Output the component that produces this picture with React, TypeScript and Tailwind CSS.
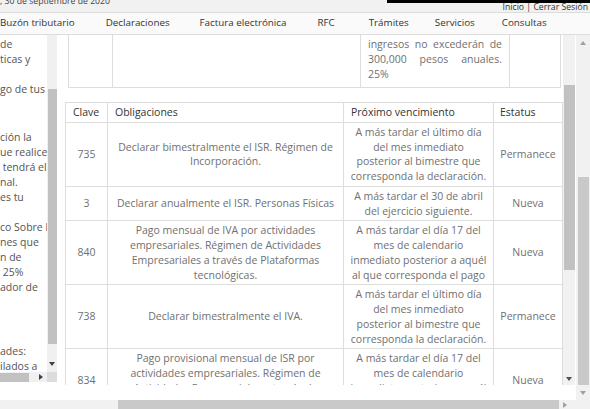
import React from "react";

interface Obligacion {
  clave: string;
  obligacion: string[];
  vencimiento: string[];
  estatus: string;
}

const ultimoDia = [
  "A más tardar el último día",
  "del mes inmediato",
  "posterior al bimestre que",
  "corresponda la declaración.",
];

const dia17 = [
  "A más tardar el día 17 del",
  "mes de calendario",
  "inmediato posterior a aquél",
  "al que corresponda el pago",
];

const obligaciones: Obligacion[] = [
  {
    clave: "735",
    obligacion: ["Declarar bimestralmente el ISR. Régimen de", "Incorporación."],
    vencimiento: ultimoDia,
    estatus: "Permanece",
  },
  {
    clave: "3",
    obligacion: ["Declarar anualmente el ISR. Personas Físicas"],
    vencimiento: ["A más tardar el 30 de abril", "del ejercicio siguiente."],
    estatus: "Nueva",
  },
  {
    clave: "840",
    obligacion: [
      "Pago mensual de IVA por actividades",
      "empresariales. Régimen de Actividades",
      "Empresariales a través de Plataformas",
      "tecnológicas.",
    ],
    vencimiento: dia17,
    estatus: "Nueva",
  },
  {
    clave: "738",
    obligacion: ["Declarar bimestralmente el IVA."],
    vencimiento: ultimoDia,
    estatus: "Permanece",
  },
  {
    clave: "834",
    obligacion: [
      "Pago provisional mensual de ISR por",
      "actividades empresariales. Régimen de",
      "Actividades Empresariales a través de",
      "Plataformas tecnológicas.",
    ],
    vencimiento: dia17,
    estatus: "Nueva",
  },
];

const menu = [
  { label: "Buzón tributario", ml: "ml-0" },
  { label: "Declaraciones", ml: "ml-[31px]" },
  { label: "Factura electrónica", ml: "ml-[30px]" },
  { label: "RFC", ml: "ml-[31px]" },
  { label: "Trámites", ml: "ml-[34px]" },
  { label: "Servicios", ml: "ml-[26px]" },
  { label: "Consultas", ml: "ml-[27px]" },
];

// lineas visibles del panel izquierdo (recortado por el scroll horizontal)
const panelLines: { t: string; mt?: string }[] = [
  { t: "de" },
  { t: "ticas y" },
  { t: "" },
  { t: "go de tus" },
  { t: "" },
  { t: "" },
  { t: "ción la", mt: "mt-[3px]" },
  { t: "ue realice" },
  { t: " tendrá el" },
  { t: "nal." },
  { t: "es tu" },
  { t: "" },
  { t: "co Sobre l." },
  { t: "nes que" },
  { t: "n de" },
  { t: " 25%" },
  { t: "ador de" },
  { t: "" },
  { t: "" },
  { t: "" },
  { t: "ades:", mt: "mt-[4px]" },
  { t: "ilados a" },
];

const Arrow: React.FC<{ dir: "up" | "down" | "right"; color?: string }> = ({ dir, color = "#505050" }) => {
  if (dir === "right") {
    return (
      <svg width="4" height="6" viewBox="0 0 4 6">
        <path d="M0 0 L4 3 L0 6 Z" fill={color} />
      </svg>
    );
  }
  return (
    <svg width="6" height="4" viewBox="0 0 6 4">
      <path d={dir === "down" ? "M0 0 L6 0 L3 4 Z" : "M0 4 L6 4 L3 0 Z"} fill={color} />
    </svg>
  );
};

const App: React.FC = () => {
  return (
    <div className="w-[590px] h-[409px] overflow-hidden bg-white font-['Open_Sans',sans-serif] text-[#707070] flex flex-col">
      {/* encabezado */}
      <div className="h-[12px] bg-[#f1f1f1] flex justify-between overflow-hidden">
        <div className="-mt-[5px] text-[8.7px] leading-[12px] text-[#444] whitespace-nowrap">
          , 30 de septiembre de 2020
        </div>
        <div className="w-[203px] flex flex-col">
          <div className="h-[3px] bg-black" />
          <div className="text-right pr-[2px] text-[8.7px] leading-[7px] mt-[1px] text-[#333] whitespace-nowrap">
            Inicio | Cerrar Sesión
          </div>
        </div>
      </div>

      {/* menu */}
      <div className="h-[23px] bg-[#fafafa] border-y border-[#dcdcdc] flex items-center text-[9.8px] text-[#333] whitespace-nowrap">
        {menu.map((m) => (
          <span key={m.label} className={m.ml}>
            {m.label}
          </span>
        ))}
      </div>

      {/* cuerpo */}
      <div className="flex h-[374px]">
        <div className="w-[576px] flex flex-col">
          <div className="flex h-[365px]">
            {/* panel izquierdo */}
            <div className="w-[58px] flex flex-col">
              <div className="h-[347px] flex flex-col">
                <div className="flex h-[337px]">
                  <div className="w-[47px] overflow-hidden pt-[1.5px] text-[10.5px] leading-[15px] text-[#555] whitespace-pre">
                    {panelLines.map((l, i) => (
                      <div key={i} className={`h-[15px] ${l.mt ?? ""}`}>
                        {l.t}
                      </div>
                    ))}
                  </div>
                  <div className="w-[10px] bg-[#f0f0f0] flex flex-col items-center">
                    <div className="h-[54px]" />
                    <div className="h-[255px] w-[9px] bg-[#c1c1c1]" />
                    <div className="flex-1" />
                    <div className="h-[17px] flex items-center justify-center">
                      <Arrow dir="down" color="#404040" />
                    </div>
                  </div>
                </div>
                <div className="flex h-[10px]">
                  <div className="w-[47px] bg-[#f0f0f0] flex items-center">
                    <div className="w-[29px] h-[9px] bg-[#c1c1c1]" />
                    <div className="w-[5px]" />
                    <div className="w-[13px] flex justify-center">
                      <Arrow dir="right" color="#404040" />
                    </div>
                  </div>
                  <div className="w-[10px] bg-[#dcdcdc]" />
                </div>
              </div>
            </div>

            {/* contenido */}
            <div className="w-[518px] flex">
              <div className="w-[505px] h-[350px] overflow-hidden flex flex-col">
                {/* tabla anterior (recortada) */}
                <table className="ml-[10px] w-[492px] table-fixed border-collapse text-[10.5px] leading-[15px]">
                  <colgroup>
                    <col className="w-[44px]" />
                    <col className="w-[248px]" />
                    <col className="w-[149px]" />
                    <col className="w-[51px]" />
                  </colgroup>
                  <tbody>
                    <tr>
                      <td className="border-x border-b border-[#ddd]" />
                      <td className="border-x border-b border-[#ddd]" />
                      <td className="border-x border-b border-[#ddd] px-[7px] pt-[2px] pb-[5px]">
                        <div className="[text-align-last:justify]">ingresos no excederán de</div>
                        <div className="[text-align-last:justify]">300,000 pesos anuales.</div>
                        <div>25%</div>
                      </td>
                      <td className="border-x border-b border-[#ddd]" />
                    </tr>
                  </tbody>
                </table>

                {/* obligaciones */}
                <table className="mt-[14px] ml-[7px] w-[497px] table-fixed border-collapse text-[10.5px] leading-[14.75px]">
                  <colgroup>
                    <col className="w-[42px]" />
                    <col className="w-[236px]" />
                    <col className="w-[150px]" />
                    <col className="w-[69px]" />
                  </colgroup>
                  <thead>
                    <tr className="text-left text-[#333]">
                      <th className="font-normal border border-[#ddd] px-[7px] py-[2px]">Clave</th>
                      <th className="font-normal border border-[#ddd] px-[7px] py-[2px]">Obligaciones</th>
                      <th className="font-normal border border-[#ddd] px-[7px] py-[2px]">Próximo vencimiento</th>
                      <th className="font-normal border border-[#ddd] px-[6px] py-[2px]">Estatus</th>
                    </tr>
                  </thead>
                  <tbody>
                    {obligaciones.map((o, i) => (
                      <tr key={i} className="text-center">
                        <td className="border border-[#ddd] py-[2px] align-middle">{o.clave}</td>
                        <td className="border border-[#ddd] px-[4px] py-[2px] align-middle whitespace-nowrap">
                          {o.obligacion.map((l, j) => (
                            <div key={j}>{l}</div>
                          ))}
                        </td>
                        <td className="border border-[#ddd] px-[2px] py-[2px] align-middle whitespace-nowrap">
                          {o.vencimiento.map((l, j) => (
                            <div key={j}>{l}</div>
                          ))}
                        </td>
                        <td className="border border-[#ddd] py-[2px] align-middle">{o.estatus}</td>
                      </tr>
                    ))}
                  </tbody>
                </table>
              </div>

              {/* scroll interno */}
              <div className="w-[12px] h-[350px] bg-[#f1f1f1] flex flex-col items-center">
                <div className="h-[50px]" />
                <div className="h-[185px] w-[11px] bg-[#c1c1c1]" />
                <div className="flex-1" />
                <div className="h-[12px] flex items-center justify-center">
                  <Arrow dir="down" color="#505050" />
                </div>
              </div>
              <div className="w-[1px]" />
            </div>
          </div>

          {/* scroll horizontal de la página */}
          <div className="h-[9px] bg-[#f1f1f1] flex items-center">
            <div className="w-[118px]" />
            <div className="w-[441px] h-[9px] bg-[#c9c9c9]" />
            <div className="w-[12px] flex justify-center">
              <Arrow dir="right" color="#a0a0a0" />
            </div>
          </div>
        </div>

        {/* scroll vertical de la página */}
        <div className="w-[14px] flex flex-col">
          <div className="h-[365px] bg-[#f1f1f1] flex flex-col items-center">
            <div className="h-[16px] flex items-center justify-center">
              <Arrow dir="up" color="#a0a0a0" />
            </div>
            <div className="h-[126px]" />
            <div className="h-[208px] w-[11px] bg-[#c9c9c9]" />
            <div className="flex-1 flex items-center justify-center">
              <Arrow dir="down" color="#a0a0a0" />
            </div>
          </div>
          <div className="h-[9px] bg-[#f1f1f1]" />
        </div>
      </div>
    </div>
  );
};

export default App;
